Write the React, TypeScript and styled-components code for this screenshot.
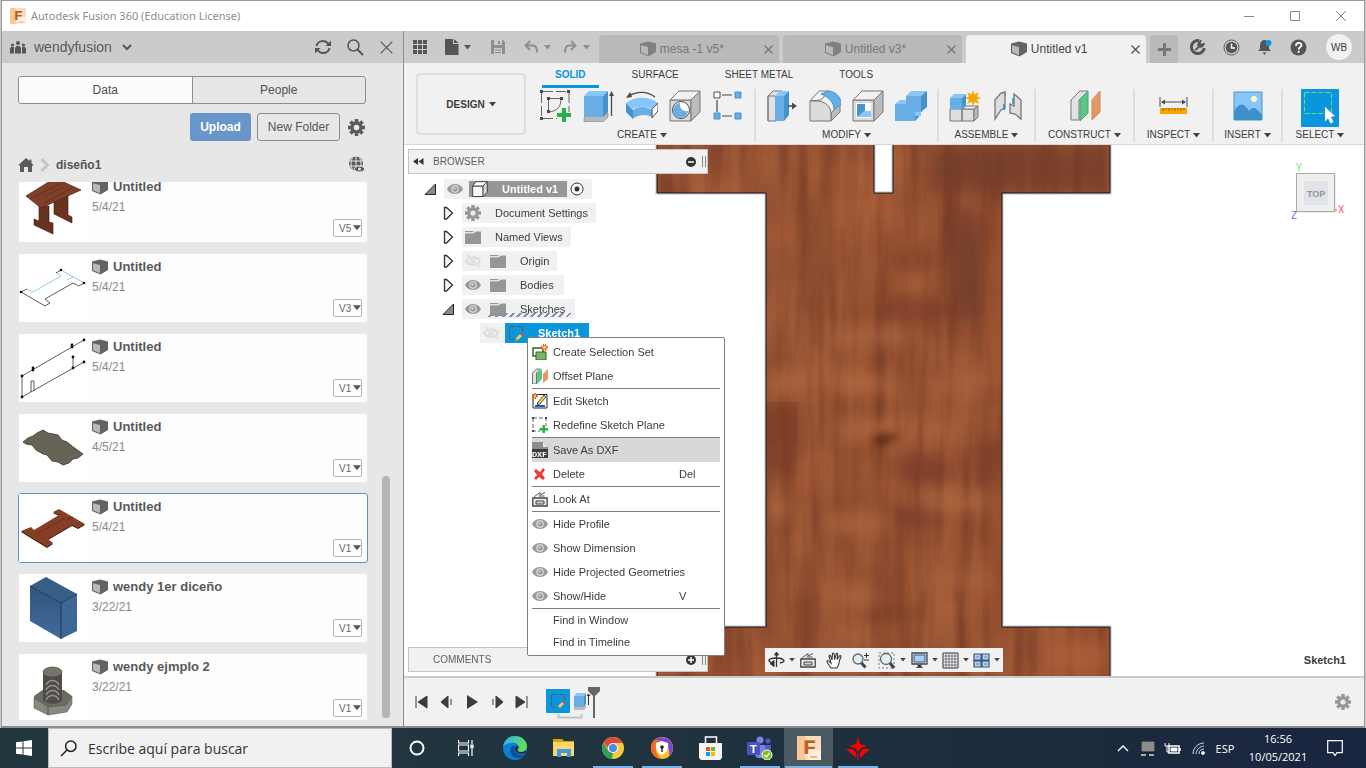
import React from 'react';
import styled, { createGlobalStyle, css } from 'styled-components';

const Global = createGlobalStyle`
  * { box-sizing: border-box; }
  body { margin: 0; font-family: "Liberation Sans", Arial, sans-serif; font-size: 11px; color: #3c3c3c; background: #c9c9c9; }
  button, input, select { font: inherit; color: inherit; background: none; border: 0; padding: 0; margin: 0; }
  ul { list-style: none; margin: 0; padding: 0; }
  h1, h2, p { margin: 0; font: inherit; }
  svg { display: block; flex: none; }
`;

/* ---------- window ---------- */
const Desktop = styled.div`
  display: flex;
  flex-direction: column;
  height: 100vh;
  min-height: 600px;
  overflow: hidden;
`;
const AppWindow = styled.div`
  flex: 1;
  min-height: 0;
  display: flex;
  flex-direction: column;
  margin: 0 1px;
  border: 1px solid #999;
  border-bottom: 2px solid #8c8c8c;
  background: #fff;
`;
const TitleBar = styled.header`
  height: 30px;
  flex: none;
  display: flex;
  align-items: center;
  padding-left: 8px;
  background: #fff;
`;
const Title = styled.h1`
  flex: 1;
  margin-left: 5px;
  font-family: "Noto Sans", "Open Sans", sans-serif;
  font-size: 11px;
  line-height: 14px;
  color: #8d8d8d;
`;
const WinButton = styled.button`
  width: 46px;
  height: 30px;
  display: grid;
  place-items: center;
`;
const Body = styled.div`
  flex: 1;
  min-height: 0;
  display: flex;
`;

/* ---------- data panel ---------- */
const DataPanel = styled.aside`
  width: 402px;
  flex: none;
  display: flex;
  flex-direction: column;
  background: #e7e7e7;
  border-right: 1px solid #8f8f8f;
`;
const PanelHeader = styled.div`
  height: 32px;
  flex: none;
  display: flex;
  align-items: center;
  padding: 0 10px 0 8px;
  background: #cbcbcb;
`;
const TeamButton = styled.button`
  flex: 1;
  display: flex;
  align-items: center;
  gap: 8px;
  font-size: 14px;
  color: #5a5a5a;
`;
const HeaderActions = styled.div`
  display: flex;
  align-items: center;
  gap: 16px;
`;
const IconButton = styled.button`
  display: grid;
  place-items: center;
`;
const Segments = styled.div`
  display: flex;
  height: 28px;
  flex: none;
  margin: 13px 37px 0 16px;
  border: 1px solid #8e8e8e;
  border-radius: 3px;
  overflow: hidden;
`;
const Segment = styled.button<{ $on?: boolean }>`
  flex: 1;
  font-size: 12px;
  color: #4f4f4f;
  ${p => p.$on && css`background: #fcfcfc; border-right: 1px solid #8e8e8e;`}
`;
const ActionRow = styled.div`
  display: flex;
  flex: none;
  align-items: center;
  justify-content: flex-end;
  margin: 9px 38px 0 16px;
  height: 28px;
`;
const Action = styled.button<{ $primary?: boolean }>`
  height: 28px;
  border-radius: 3px;
  font-size: 12px;
  ${p => p.$primary
    ? css`width: 61px; margin-right: 6px; background: #6896ca; color: #fff; font-weight: bold;`
    : css`width: 83px; margin-right: 8px; border: 1px solid #8e8e8e; color: #555;`}
`;
const Crumbs = styled.nav`
  display: flex;
  flex: none;
  align-items: center;
  gap: 6px;
  height: 41px;
  padding: 6px 38px 0 16px;
  font-size: 12px;
  font-weight: bold;
  color: #555;
`;
const Crumb = styled.span`flex: 1;`;
const ListArea = styled.div`
  flex: 1;
  min-height: 0;
  display: flex;
  margin: 0 13px 6px 16px;
`;
const CardList = styled.ul`
  flex: 1;
  overflow: hidden;
`;
const ScrollTrack = styled.div`
  width: 8px;
  margin-left: 14px;
  display: flex;
  flex-direction: column;
  justify-content: flex-end;
`;
const ScrollThumb = styled.div`
  height: 45%;
  margin-bottom: 2px;
  border-radius: 4px;
  background: #b5b5b5;
`;
const Card = styled.li<{ $selected?: boolean }>`
  display: flex;
  height: 70px;
  margin-bottom: 10px;
  border: 1px solid ${p => (p.$selected ? '#5f90ca' : 'transparent')};
  border-radius: 3px;
  background: #fdfdfd padding-box;
  &:first-child { margin-top: -9px; }
`;
const Thumb = styled.div`
  width: 68px;
  background: #fff;
`;
const CardText = styled.div`
  flex: 1;
  padding: 4px 0 0 5px;
`;
const CardName = styled.h2`
  display: flex;
  align-items: center;
  gap: 5px;
  height: 17px;
  font-size: 13px;
  font-weight: bold;
  color: #595959;
`;
const CardDate = styled.p`
  margin-top: 5px;
  font-size: 12px;
  line-height: 15px;
  color: #8a8a8a;
`;
const VersionBox = styled.label`
  align-self: flex-end;
  display: flex;
  align-items: center;
  width: 29px;
  height: 18px;
  margin: 0 5px 5px 0;
  padding-left: 5px;
  border: 1px solid #b5b5b5;
  border-radius: 2px;
  color: #666;
`;
const VersionSelect = styled.select`
  appearance: none;
  width: 14px;
  font-size: 10px;
`;

/* ---------- workspace ---------- */
const Workspace = styled.main`
  flex: 1;
  min-width: 0;
  display: flex;
  flex-direction: column;
`;
const TabBar = styled.div`
  height: 32px;
  flex: none;
  display: flex;
  align-items: center;
  background: #cbcbcb;
`;
const QuickTools = styled.div`
  width: 195px;
  flex: none;
  display: flex;
  align-items: center;
  padding-left: 9px;
`;
const QuickButton = styled.button<{ $gap?: number }>`
  display: flex;
  align-items: center;
  gap: 5px;
  margin-right: ${p => p.$gap ?? 0}px;
`;
const DocTabs = styled.div`
  flex: 1;
  min-width: 0;
  display: flex;
  gap: 4px;
  align-self: flex-end;
`;
const DocTab = styled.div<{ $active?: boolean }>`
  flex: 1;
  display: flex;
  align-items: center;
  height: 28px;
  padding: 0 6px 0 1px;
  border-radius: 4px 4px 0 0;
  font-size: 12px;
  background: ${p => (p.$active ? '#f1f1f1' : '#b9b9b9')};
  color: ${p => (p.$active ? '#444' : '#777')};
`;
const TabLabel = styled.button`
  flex: 1;
  display: flex;
  align-items: center;
  justify-content: center;
  gap: 4px;
`;
const AddTab = styled.button`
  width: 28px;
  height: 28px;
  margin-left: 4px;
  align-self: flex-end;
  display: grid;
  place-items: center;
  background: #bababa;
  border-radius: 4px 4px 0 0;
`;
const Services = styled.div`
  width: 186px;
  flex: none;
  display: flex;
  align-items: center;
  gap: 17px;
  padding-left: 12px;
`;
const Avatar = styled.button`
  width: 26px;
  height: 26px;
  margin-left: 2px;
  border-radius: 50%;
  background: #f1f1f1;
  font-size: 10px;
`;

const Ribbon = styled.div`
  flex: none;
  display: flex;
  height: 82px;
  background: #f1f1f1;
  border-bottom: 1px solid #d8d8d8;
`;
const DesignButton = styled.button`
  width: 110px;
  height: 62px;
  flex: none;
  margin: 10px 4px 0 12px;
  display: flex;
  align-items: center;
  justify-content: center;
  gap: 4px;
  border: 2px solid #dedede;
  border-radius: 4px;
  font-size: 10px;
  font-weight: bold;
`;
const RibbonMain = styled.div`
  flex: 1;
  min-width: 0;
`;
const RibbonTabs = styled.div`
  display: flex;
  gap: 20px;
  height: 25px;
  padding-left: 12px;
`;
const RibbonTab = styled.button<{ $on?: boolean }>`
  height: 25px;
  padding: 0 13px;
  font-size: 10px;
  border-bottom: 3px solid ${p => (p.$on ? '#0a96dc' : 'transparent')};
  ${p => p.$on && css`color: #0a96dc; font-weight: bold;`}
`;
const Groups = styled.div`
  display: flex;
  height: 53px;
  margin-top: 1px;
`;
const Group = styled.section<{ $w: number }>`
  flex: 0 1 ${p => p.$w}px;
  display: flex;
  flex-direction: column;
  align-items: center;
  & + & { border-left: 2px solid #dedede; }
`;
const Tools = styled.div`
  display: flex;
  height: 34px;
`;
const Tool = styled.button`
  width: 43px;
  height: 34px;
  display: grid;
  place-items: center;
`;
const GroupLabel = styled.button`
  display: flex;
  align-items: center;
  gap: 3px;
  margin-top: 6px;
  font-size: 10px;
  line-height: 12px;
  white-space: nowrap;
`;

/* ---------- canvas ---------- */
const Canvas = styled.div`
  position: relative;
  flex: 1;
  min-height: 0;
  display: flex;
  overflow: hidden;
  background: #fff;
`;
const Model = styled.svg`
  position: absolute;
  left: 251px;
  top: 0;
`;
const BrowserColumn = styled.div`
  position: relative;
  display: flex;
  flex-direction: column;
  width: 300px;
  margin: 4px;
`;
const PaletteBar = styled.div`
  height: 25px;
  flex: none;
  display: flex;
  align-items: center;
  padding: 0 1px 0 4px;
  border: 1px solid #c4c4c4;
  background: #f1f1f1;
  font-size: 10px;
  color: #5f5f5f;
`;
const PaletteTitle = styled.span<{ $indent?: number }>`
  flex: 1;
  margin-left: ${p => p.$indent}px;
`;
const Grip = styled.span`
  width: 4px;
  height: 11px;
  margin-left: 6px;
  border: solid #8a8a8a;
  border-width: 0 1px;
`;
const Tree = styled.ul`
  flex: 1;
  padding: 3px 0 0 16px;
`;
const Node = styled.li<{ $depth: number }>`
  display: flex;
  align-items: center;
  height: 24px;
  padding-left: ${p => p.$depth * 18}px;
`;
const Toggle = styled.button`
  width: 20px;
  height: 16px;
  flex: none;
`;
const NoToggle = styled.span`
  width: 20px;
  flex: none;
`;
const NodeBox = styled.div<{ $r?: number }>`
  display: flex;
  align-items: center;
  height: 20px;
  padding-right: ${p => p.$r ?? 10}px;
  background: #f1f1f1;
`;
const Cell = styled.span<{ $w?: number }>`
  width: ${p => p.$w ?? 25}px;
  height: 20px;
  display: flex;
  align-items: center;
  padding-left: 3px;
`;
const NodeName = styled.span<{ $tone?: string; $hatch?: boolean }>`
  display: flex;
  align-items: center;
  height: ${p => (p.$tone === '#969696' ? 16 : 20)}px;
  ${p => p.$tone && css`background: ${p.$tone}; color: #fff; font-weight: bold; padding-right: 9px;`}
  ${p => p.$hatch && css`
    position: relative;
    margin-right: -8px;
    padding-right: 8px;
    &::after {
      content: '';
      position: absolute;
      inset: 14px 0 2px 0;
      background: repeating-linear-gradient(135deg, transparent 0 3px, #7d91b3 3px 5px);
    }
  `}
`;
const Menu = styled.ul`
  position: absolute;
  left: 123px;
  top: 192px;
  width: 198px;
  padding: 2px 4px;
  border: 1px solid #808080;
  border-radius: 2px;
  background: #fff;
`;
const MenuItem = styled.li<{ $line?: boolean; $on?: boolean; $short?: boolean }>`
  ${p => p.$line && css`border-top: 1px solid #808080;`}
  background: ${p => (p.$on ? '#d8d8d8' : 'none')};
  button {
    width: 100%;
    height: ${p => (p.$short ? 22 : 24)}px;
    display: flex;
    align-items: center;
    text-align: left;
  }
`;
const MenuIcon = styled.span`width: 21px; flex: none;`;
const MenuText = styled.span<{ $key?: boolean }>`
  ${p => (p.$key ? css`width: 41px;` : css`flex: 1; white-space: nowrap;`)}
`;
const NavBar = styled.div`
  position: absolute;
  left: 0;
  right: 0;
  bottom: 4px;
  width: 238px;
  height: 24px;
  margin: 0 auto;
  padding-left: 3px;
  display: flex;
  align-items: center;
  background: #f1f1f1;
`;
const NavButton = styled.button<{ $w: number }>`
  width: ${p => p.$w}px;
  height: 24px;
  display: flex;
  align-items: center;
  gap: 4px;
`;
const ViewCube = styled.svg`
  position: absolute;
  right: 16px;
  top: 14px;
`;
const Status = styled.div`
  position: absolute;
  right: 18px;
  bottom: 10px;
  font-weight: bold;
`;
const Timeline = styled.div`
  flex: none;
  display: flex;
  align-items: center;
  height: 50px;
  padding: 0 13px 0 5px;
  border-top: 2px solid #ccc;
  background: #f1f1f1;
`;
const PlayButton = styled.button`
  width: 25px;
  display: grid;
  place-items: center;
`;
const Features = styled.div`
  flex: 1;
  padding-left: 12px;
`;

/* ---------- taskbar ---------- */
const Taskbar = styled.footer`
  height: 40px;
  flex: none;
  display: flex;
  background: linear-gradient(90deg, #22383f 0%, #20343f 45%, #1b2a3d 80%, #1a2540 100%);
  color: #fff;
  font-family: "Open Sans", "Noto Sans", sans-serif;
`;
const StartButton = styled.button`
  width: 48px;
  display: grid;
  place-items: center;
`;
const SearchBox = styled.label`
  width: 344px;
  display: flex;
  align-items: center;
  gap: 11px;
  padding-left: 11px;
  background: #f1f1f1;
  border: 1px solid #bbb;
`;
const SearchInput = styled.input`
  flex: 1;
  min-width: 0;
  font-size: 14px;
  color: #333;
  outline: 0;
  &::placeholder { color: #333; opacity: 1; }
`;
const TaskButton = styled.button<{ $open?: boolean; $active?: boolean }>`
  width: 49px;
  height: 40px;
  display: grid;
  place-items: center;
  ${p => p.$open && css`background: linear-gradient(#78b4ea, #78b4ea) center bottom / 40px 2px no-repeat;`}
  ${p => p.$active && css`background: linear-gradient(#78b4ea, #78b4ea) center bottom / 47px 2px no-repeat, #4a5962;`}
`;
const Tray = styled.div`
  margin-left: auto;
  display: flex;
  align-items: center;
  padding-right: 13px;
  font-size: 11px;
`;
const TrayItem = styled.button<{ $w: number }>`
  width: ${p => p.$w}px;
  height: 40px;
  display: grid;
  place-items: center;
`;
const Clock = styled.time`
  width: 78px;
  text-align: center;
  line-height: 18px;
`;

/* ---------- icons ---------- */
const Caret = ({ c = '#444', s = 7 }: { c?: string; s?: number }) => (
  <svg width={s} height={s - 2} viewBox="0 0 7 5"><path d="M0 0h7L3.5 4.5z" fill={c} /></svg>
);
const Gear = ({ c = '#5c5c5c', s = 16 }: { c?: string; s?: number }) => (
  <svg width={s} height={s} viewBox="0 0 16 16" fill="none">
    {[0, 45, 90, 135].map(a => <path key={a} d="M6.300 0h3.400v16H6.300z" fill={c} transform={`rotate(${a} 8 8)`} />)}
    <circle cx="8" cy="8" r="5.800" fill={c} />
    <circle cx="8" cy="8" r="2.600" fill="#ececec" />
  </svg>
);
const DocCube = ({ dim }: { dim?: boolean }) => (
  <svg width="16" height="16" viewBox="0 0 16 16" opacity={dim ? 0.65 : 1}>
    <path d="M0 2.500 8 .5l8 2v8.500L8.500 15.500 0 12z" fill="#636363" />
    <path d="M1 4.200 8 6v8.200l-7-3z" fill="#b8b8b8" />
  </svg>
);
const Eye = () => (
  <svg width="16" height="12" viewBox="0 0 16 12">
    <path d="M0 6C3-.7 13-.7 16 6 13 12.700 3 12.700 0 6z" fill="#999" />
    <circle cx="8" cy="6" r="3.700" fill="#e8e8e8" /><circle cx="8" cy="6" r="2.700" fill="#999" /><circle cx="7.500" cy="5.500" r="1" fill="#e8e8e8" />
  </svg>
);
const EyeOff = () => (
  <svg width="16" height="14" viewBox="0 0 16 14" fill="none" stroke="#d9d9d9">
    <path d="M1 7c3-5 11-5 14 0-3 5-11 5-14 0z" strokeWidth="2" /><circle cx="8" cy="7" r="2" strokeWidth="1.500" />
    <path d="m2 1 13 12" stroke="#f1f1f1" strokeWidth="3" /><path d="m2 1 13 12" strokeWidth="1.500" />
  </svg>
);
const Folder = () => (
  <svg width="16" height="14" viewBox="0 0 16 14">
    <path d="M0 4h16v10H0z" fill="#969696" /><path d="M0 1h8l1 1H0zM0 2.800h9l2-1.300h5V5H0z" fill="#969696" /><path d="M0 3h8l2-1" stroke="#f1f1f1" fill="none" strokeWidth=".8" />
  </svg>
);
const SketchIcon = () => (
  <svg width="16" height="16" viewBox="0 0 16 16" fill="none">
    <path d="M2 1.500h12M2 14.500h7M1.500 2v11M14.500 2v6" stroke="#595959" strokeDasharray="5 2" />
    <path d="m8 13 4-4 2 2-4 4z" fill="#f9cb55" /><path d="m12 9 1.500-1.500 2 2L14 11z" fill="#f04040" /><path d="m7 15.500 1-2.500 2 2z" fill="#e8a75c" />
  </svg>
);
const Close = ({ c = '#666', s = 10 }: { c?: string; s?: number }) => (
  <svg width={s} height={s} viewBox="0 0 10 10" stroke={c} strokeWidth={s > 12 ? 0.9 : 1.4}><path d="m.5.5 9 9m0-9-9 9" /></svg>
);
const Search = ({ c = '#555', flip }: { c?: string; flip?: boolean }) => (
  <svg width="17" height="17" viewBox="0 0 17 17" fill="none" stroke={c} strokeWidth="1.500">
    {flip ? <path d="M6.500 10.500 1 16M16 6.200a5.200 5.200 0 1 1-10.400 0 5.200 5.200 0 0 1 10.400 0z" />
      : <><circle cx="6.500" cy="6.500" r="5.500" /><path d="m10.500 10.500 5.500 5.500" strokeWidth="2" /></>}
  </svg>
);
const FusionLogo = ({ s }: { s: number }) => (
  <svg width={s} height={s} viewBox="0 0 24 24">
    <path d="M0 0h24v24H0z" fill="#fbdcc0" /><path d="M0 0h8v24H0z" fill="#f9c79b" /><path d="M8 14h16v10H12z" fill="#fdeee0" />
    <text x="6" y="18" fontFamily="Liberation Sans, sans-serif" fontWeight="bold" fontSize="20" fill="#e08a38">F</text>
    <text x="7" y="18" fontFamily="Liberation Sans, sans-serif" fontWeight="bold" fontSize="19" fill="#b5621f">F</text>
    <path d="M13 20h7v2h-7z" fill="#f5b781" />
  </svg>
);
const Pm = ({ plus }: { plus?: boolean }) => (
  <svg width="10" height="10" viewBox="0 0 10 10"><circle cx="5" cy="5" r="5" fill="#333" /><path d={plus ? 'M2 5h6M5 2v6' : 'M2 5h6'} stroke="#fff" strokeWidth="1.500" /></svg>
);

/* ribbon drawings, 32px grid */
const K = '#4a4a4a';
const B1 = '#86c6fa';
const B2 = '#68aee4';
const B3 = '#4593ca';
const ribbonArt: Record<string, React.ReactNode> = {
  sketch: <>
    <g fill="none" stroke="#666"><path d="M3 1.500h24M29 3v19M1.500 3v24M3 28.500h14" strokeDasharray="10 3" /><path d="M9 8.500h12M8.500 9v12M9 22c8-1 12-5 12-13" /></g>
    <path d="M0 0h3v3H0zM27 0h3v3h-3zM0 27h3v3H0zM7 7h3v3H7zM20 7h3v3h-3zM7 20h3v3H7z" fill={K} />
    <path d="M22 18h4v5h5v4h-5v5h-4v-5h-5v-4h5z" fill="#25b24b" />
  </>,
  extrude: <>
    <path d="m1 28 4-4 20-1v4l-5 5H1z" fill="#b8b8b8" stroke="#777" strokeWidth=".6" />
    <path d="M1 6h19v21H1z" fill={B2} /><path d="m1 6 5-5h19l-5 5z" fill={B1} /><path d="m20 6 5-5v21l-5 5z" fill={B3} />
    <path d="M28.500 26V4" stroke={K} strokeWidth="1.300" /><path d="m26 6 2.500-5L31 6z" fill={K} />
  </>,
  revolve: <>
    <path d="M0 13C8 6 24 6 32 13l-6 6c-5-3-14-3-19 0z" fill={B1} /><path d="M0 13v9l7 7v-9z" fill={B3} /><path d="M7 20c5-4 14-4 19 0v7c-5-3-14-3-19 2z" fill={B2} />
    <path d="m26 19 6-6v8l-6 7z" fill="#fff" stroke={K} /><path d="M3 6c8-5 18-5 26 1" fill="none" stroke={K} strokeWidth="1.400" /><path d="m0 8 4-6 2 5z" fill={K} />
  </>,
  hole: <>
    <path d="M1 10h21v21H1z" fill="#dcdcdc" stroke="#777" /><path d="m1 10 9-9h21l-9 9z" fill="#f2f2f2" stroke="#777" /><path d="m22 10 9-9v21l-9 9z" fill="#bcbcbc" stroke="#777" />
    <circle cx="12" cy="20" r="8.500" fill="#fff" stroke={K} /><path d="M11 13a7.500 7.500 0 1 0 8 8c-5 1-9-3-8-8z" fill={B2} />
  </>,
  pattern: <>
    <path d="M10 5h10M10 26h10M5 10v12" stroke={K} strokeWidth="1.200" /><path d="M2 2h6v6H2z" fill="#fff" stroke={K} /><path d="M23 2h6v6h-6zM2 23h6v6H2zM23 23h6v6h-6z" fill={B2} stroke={B3} />
  </>,
  press: <>
    <path d="m2 6 5-5h9v25l-6 5H2z" fill="#e2e2e2" stroke="#777" /><path d="M2 6h7M2 6v25" stroke="#777" />
    <path d="M9 6h9v25H9z" fill={B2} /><path d="m9 6 5-5h9l-5 5z" fill={B1} /><path d="m18 6 5-5v24l-5 6z" fill={B3} /><path d="M22 16h6" stroke={K} strokeWidth="1.500" /><path d="m26 12.500 5 3.500-5 3.500z" fill={K} />
  </>,
  fillet: <>
    <path d="M1 11 10 1h10l-8 9z" fill="#f4f4f4" stroke="#777" />
    <path d="M22 31v-8l9-9v8z" fill="#bcbcbc" stroke="#777" />
    <path d="M1 31V11h6c9 0 15 5 15 13v7z" fill="#dcdcdc" stroke="#777" />
    <path d="M12 4 20 1c7 1 12 6 12 13l-7 6c0-8-5-13-13-16z" fill={B2} stroke={B3} />
  </>,
  shell: <>
    <path d="M1 10h21v21H1z" fill="#dcdcdc" stroke="#777" /><path d="m1 10 9-9h21l-9 9z" fill="#f2f2f2" stroke="#777" /><path d="m22 10 9-9v21l-9 9z" fill="#bcbcbc" stroke="#777" />
    <path d="M4 13h15v15H4z" fill="#fff" /><path d="M5 14h8v8l-8 5z" fill={B3} /><path d="M5 27l7-6h7v6z" fill={B1} />
  </>,
  combine: <>
    <path d="M0 14h11V6h15v20h-6v5H0z" fill={B2} /><path d="m0 14 5-4h6v4zM11 6l5-5h16l-6 5z" fill={B1} /><path d="m26 6 6-5v16l-6 5zM20 25l4-3v5l-4 4z" fill={B3} /><path d="M20 22h6v4h-6z" fill={B1} />
  </>,
  component: <>
    <path d="M1 19h12v12H1zM13 19h12v12H13z" fill="#dedede" stroke="#777" /><path d="m13 19 4-3h12l-4 3z" fill="#f2f2f2" stroke="#777" /><path d="m25 19 4-3v11l-4 4z" fill="#bbb" stroke="#777" />
    <path d="M1 8h12v11H1z" fill={B2} /><path d="m1 8 4-4h12l-4 4z" fill={B1} /><path d="m13 8 4-4v11l-4 4z" fill={B3} />
    <path d="m24 0 1.500 4.500L30 2l-2 4.500 4 1.500-4 1.500 2 4.500-4.500-2L24 16l-1.500-4.500L18 14l2-4.500L16 8l4-1.500L18 2l4.500 2.500z" fill="#f7a600" />
  </>,
  joint: <>
    <path d="m3 10 6-7 4-1v16l-4 2-6 9z" fill="#ddd" stroke="#777" strokeWidth="1.300" /><path d="M10 4c2-4 5-1 3 2" fill="none" stroke="#777" /><path d="M29 10l-7-6v12l-4-2v9l5 1 6 5z" fill="#ddd" stroke="#777" strokeWidth="1.300" /><path d="M12 14v6M21 8v6" stroke="#0a96dc" strokeWidth="1.500" />
  </>,
  plane: <>
    <path d="m2 10 9-9h8l-9 9v20H2z" fill="#e2e2e2" stroke="#777" /><path d="m11 9 8-8v22l-8 8z" fill="#5bc684" stroke="#4aa56c" /><path d="m23 10 8-9v21l-8 8z" fill="#e69866" stroke="#cf855a" />
  </>,
  measure: <>
    <path d="M2 7v10M29 7v10M4 12h23" stroke={K} /><path d="m3 12 4-2.500v5zM28 12l-4-2.500v5z" fill={K} /><path d="M2 18h27v6H2z" fill="#f9a600" /><path d="M5 18v3M8 18v2M11 18v3M14 18v2M17 18v3M20 18v2M23 18v3M26 18v2" stroke="#8a5c00" />
  </>,
  picture: <>
    <path d="M2 2h28v28H2z" fill={B1} stroke={B3} /><circle cx="22" cy="9" r="3" fill="#fbf8c3" /><path d="M2 21c5-7 9-10 15 0 4-5 7-4 13 4v5H2z" fill="#3d90cc" />
  </>,
};
const Art = ({ n }: { n: string }) => <svg width="32" height="32" viewBox="0 0 32 32">{ribbonArt[n]}</svg>;

const SelectArt = () => (
  <svg width="38" height="38" viewBox="0 0 38 38">
    <path d="M0 0h38v38H0z" fill="#0a96dc" /><path d="M3.500 3.500h27v21h-27z" fill="none" stroke="#6fdc83" strokeDasharray="5 2" />
    <path d="m24 18 10 9-4 1 2.500 5-3 1.500L27 29.500l-3 3z" fill="#fff" />
  </svg>
);

/* context menu drawings, 16px grid */
const menuArt: Record<string, React.ReactNode> = {
  set: <><path d="M1 4h10v8H1z" fill="#fff" stroke="#2c6a1e" strokeWidth="1.500" /><path d="M4 8h10v8H4z" fill="#7cb267" stroke="#2c6a1e" /><circle cx="12.500" cy="3.500" r="2.500" fill="#ffc83d" stroke="#d8451a" strokeDasharray="1 1" strokeWidth="2" /></>,
  plane: <><path d="m.5 5 4-4h4l-4 4v11h-4z" fill="#e2e2e2" stroke="#777" /><path d="m5 5 5-4v10l-5 5z" fill="#5bc684" /><path d="m11 6 5-5v10l-5 4z" fill="#e69866" /></>,
  edit: <><path d="M1 1.500h14V15H1z" fill="#fff" stroke="#222" /><path d="M3 13h10" stroke="#1661c9" strokeWidth="2" /><path d="m6 9 6-7 2 2-6 7-3 1z" fill="#f8c649" stroke="#333" strokeWidth=".8" /><circle cx="3" cy="3" r="2" fill="#ffc83d" stroke="#d8451a" strokeDasharray="1 1" strokeWidth="2" /></>,
  redefine: <><path d="M1 1h13v8M1 1v13h7" fill="none" stroke="#666" strokeDasharray="4 2" /><path d="M0 0h2v2H0zM13 0h2v2h-2zM0 13h2v2H0z" fill="#444" /><path d="M10.500 8h2.500v3h3v2.500h-3v3h-2.500v-3h-3V11h3z" fill="#25b24b" /></>,
  dxf: <><path d="M0 0h11l5 5v3H0z" fill="#8d8d8d" /><path d="M11 0v5h5z" fill="#e6e6e6" /><path d="M0 7h16v9H0z" fill="#3c3c3c" /><text x="0" y="15" fontSize="8" fontWeight="bold" fontFamily="Roboto, sans-serif" fill="#fff">DXF</text></>,
  del: <path d="m2 5 2-2 4 3 3-4 2 2-3 4 3 4-2 2-4-3-3 3-2-2 3-3z" fill="#ee3b3b" />,
  look: <><path d="M.8 7h14.400v8H.8z" fill="#e8ecef" stroke="#444" strokeWidth="1.300" /><path d="M4 10h8v3H4z" fill="#ccd4da" stroke="#444" /><path d="M2.500 7V5.500L8 1.500v2.500l5-2.500M6.500 5h6" fill="none" stroke="#555" /></>,
};
const MArt = ({ n }: { n: string }) => n === 'eye' ? <Eye /> : <svg width="16" height="16" viewBox="0 0 16 16">{menuArt[n]}</svg>;

/* ---------- model and thumbnails ---------- */
const shape = 'M0-3H217V48H236V-3H453V48H345V482H453V535H0V482H109V48H0Z';
const ModelView = () => (
  <Model width="460" height="100%" viewBox="-2 0 460 531" preserveAspectRatio="xMinYMin slice" aria-label="Wood board">
    <defs>
      <clipPath id="board"><path d={shape} /></clipPath>
      <filter id="grain" x="0" y="0" width="1" height="1" colorInterpolationFilters="sRGB">
        <feTurbulence type="fractalNoise" baseFrequency="0.06 0.005" numOctaves="3" seed="8" />
        <feColorMatrix values="0 0 0 0 .4  0 0 0 0 .19  0 0 0 0 .13  2.200 0 0 0 -.850" />
      </filter>
      <filter id="glow" x="0" y="0" width="1" height="1" colorInterpolationFilters="sRGB">
        <feTurbulence type="fractalNoise" baseFrequency="0.04 0.012" numOctaves="2" seed="31" />
        <feColorMatrix values="0 0 0 0 .72  0 0 0 0 .43  0 0 0 0 .26  2.400 0 0 0 -1" />
      </filter>
      <filter id="figure" x="0" y="0" width="1" height="1" colorInterpolationFilters="sRGB">
        <feTurbulence type="fractalNoise" baseFrequency="0.012 0.02" numOctaves="2" seed="12" />
        <feColorMatrix values="0 0 0 0 .72  0 0 0 0 .42  0 0 0 0 .26  2.400 0 0 0 -.950" />
      </filter>
      <filter id="soft" x="-.5" y="-.5" width="2" height="2"><feGaussianBlur stdDeviation="8" /></filter>
      <filter id="knot" x="-.5" y="-.5" width="2" height="2"><feGaussianBlur stdDeviation="4" /></filter>
    </defs>
    <path d={shape} fill="none" stroke="#d5e0f3" strokeWidth="4" />
    <g clipPath="url(#board)">
      <path d="M0 0h453v531H0z" fill="#965233" />
      <path d="M0 0h453v531H0z" filter="url(#figure)" opacity=".45" />
      <path d="M0 0h453v531H0z" filter="url(#glow)" opacity=".4" />
      <path d="M0 0h453v531H0z" filter="url(#grain)" opacity=".55" />
      <g filter="url(#soft)">
        <path d="M270 0h183v48H270z" fill="#6b3526" opacity=".6" />
        <path d="M109 262h28v70h-28zM320 290h30v50h-30zM338 340h12v140h-12z" fill="#783924" opacity=".65" />
        <ellipse cx="310" cy="120" rx="14" ry="60" fill="#5f3024" opacity=".6" />
        <ellipse cx="255" cy="115" rx="26" ry="14" fill="#713424" opacity=".45" />
        <ellipse cx="260" cy="165" rx="40" ry="14" fill="#713424" opacity=".5" />
        <ellipse cx="265" cy="325" rx="30" ry="16" fill="#713424" opacity=".6" />
        <ellipse cx="262" cy="372" rx="30" ry="12" fill="#713424" opacity=".55" />
        <ellipse cx="235" cy="467" rx="40" ry="10" fill="#74351f" opacity=".5" />
        <ellipse cx="155" cy="110" rx="12" ry="60" fill="#74422b" opacity=".5" />
        <path d="M175 184h70v14h-70zM175 232h60v14h-60zM110 225h34v28h-34zM270 350h60v14h-60zM170 370h60v16h-60zM180 275h60v20h-60zM112 352h20v20h-20zM270 235h50v10h-50zM260 430h70v10h-70zM180 445h40v16h-40z" fill="#bd6f42" opacity=".6" />
        <path d="M333 60h14v180h-14z" fill="#a5522c" opacity=".6" />
        <path d="M390 494h63v37h-63z" fill="#b36238" opacity=".7" />
      </g>
      <path d="M109 257h32v40h-32z" fill="#7c3b26" opacity=".4" />
      <path d="M214 295c8-8 18-8 30-3-8 4-16 4-18 12z" fill="#552619" filter="url(#knot)" opacity=".9" />
    </g>
    <path d={shape} fill="none" stroke="#1c0f0b" />
  </Model>
);

const dot = (p: number[][], r = 1.500) => p.map(([x, y]) => <circle key={`${x}-${y}`} cx={x} cy={y} r={r} fill="#111" />);
const thumbs: Record<string, React.ReactNode> = {
  table: <>
    <path d="M20 32h10v16l4 1v11l-19-9v-6l5 2zM35 27l14-6v20l4 2v6l-18-9z" fill="#6a3320" stroke="#3c1a10" strokeWidth=".6" />
    <path d="M7 22 36 4l26 12-40 18z" fill="#7e402a" stroke="#4a2317" strokeWidth=".7" /><path d="m15 23 28-14M25 29l28-15M26 22l18-9" stroke="#5d2b1c" strokeWidth=".8" />
  </>,
  outline: <>
    <path d="m2 38 24 14 5-3-5-4 28-16 6 3 5-3" fill="none" stroke="#333" strokeWidth=".8" /><path d="m8 35 6 3 28-16-5-4M42 16l23 13M48 26l6-3" fill="none" stroke="#8accf0" /><path d="m2 38 6-3M37 19l5-3" stroke="#333" strokeWidth=".8" />{dot([[2, 38], [42, 16], [65, 29]], 1.300)}
  </>,
  frame: <>
    <path d="M3 63V42L65 6M3 63l62-35M54 23v12M12 58V47h3v10" fill="none" stroke="#333" strokeWidth=".8" />{dot([[3, 42], [3, 63], [14, 34], [14, 36], [53, 11], [53, 13], [65, 6], [65, 28], [54, 23], [54, 34]], 1.400)}
  </>,
  slab: <><path d="m4 28 5-4 5-2 4-3 6-3 5 3 5 1 5 1 4 5 5 2 5 4 4 3 7 5-5 4-5 1-4 4-6 2-5-3-6-1-5-6-4-1-7-4-4-5-6-1z" fill="#686357" stroke="#37342d" strokeWidth=".8" /></>,
  board: <>
    <path d="m2 38 10-4 3 3 25-15-6-3 6-3 26 15-7 4-6-3-24 14 5 4-6 4z" fill="#35190f" />
    <path d="m2 37 10-4 3 3 25-15-6-3 6-3 26 15-7 4-6-3-24 14 5 4-6 4z" fill="#863f25" /><path d="m16 41 30-17M48 26l6-3" stroke="#6b2d1a" />
  </>,
  box: <>
    <path d="M11 12 27 3l31 17-16 9z" fill="#365f86" /><path d="m11 12 31 17v36L11 47z" fill="url(#bx)" /><path d="m42 29 16-9v37l-16 8z" fill="#3f6795" /><path d="m11 12 31 17 16-9M42 29v36" fill="none" stroke="#14283f" strokeWidth=".8" />
    <defs><linearGradient id="bx" x1="0" y1="0" x2="0" y2="1"><stop offset="0" stopColor="#31557a" /><stop offset="1" stopColor="#426b9f" /></linearGradient></defs>
  </>,
  bolt: <>
    <path d="m15 42 10-7 20 1 8 6-2 8-10 4-12 2-14-6z" fill="#6b6a63" /><path d="m15 44 14 9v8l-14-7zM29 53l18-2 6-9v8l-5 8-19 3z" fill="#898780" stroke="#4c4b46" strokeWidth=".5" />
    <path d="M24 18v28c4 5 16 5 19 0V18z" fill="#4d4c47" /><ellipse cx="33.500" cy="18" rx="9.500" ry="5" fill="#77746a" stroke="#444" strokeWidth=".6" />
    {[27, 32, 37, 42].map(y => <path key={y} d={`M27 ${y + 4}c3-6 10-6 13 0`} fill="none" stroke="#96938b" strokeWidth="1.500" />)}
  </>,
};

const cards = [
  ['Untitled', '5/4/21', 'V5', 'table'],
  ['Untitled', '5/4/21', 'V3', 'outline'],
  ['Untitled', '5/4/21', 'V1', 'frame'],
  ['Untitled', '4/5/21', 'V1', 'slab'],
  ['Untitled', '5/4/21', 'V1', 'board'],
  ['wendy 1er diceño', '3/22/21', 'V1', 'box'],
  ['wendy ejmplo 2', '3/22/21', 'V1', 'bolt'],
];
const groups: { label: string; w: number; tools: string[] }[] = [
  { label: 'CREATE', w: 224, tools: ['sketch', 'extrude', 'revolve', 'hole', 'pattern'] },
  { label: 'MODIFY', w: 183, tools: ['press', 'fillet', 'shell', 'combine'] },
  { label: 'ASSEMBLE', w: 97, tools: ['component', 'joint'] },
  { label: 'CONSTRUCT', w: 99, tools: ['plane'] },
  { label: 'INSPECT', w: 79, tools: ['measure'] },
  { label: 'INSERT', w: 69, tools: ['picture'] },
  { label: 'SELECT', w: 76, tools: ['select'] },
];
const menu: { t: string; icon?: string; key?: string; line?: boolean; on?: boolean }[] = [
  { t: 'Create Selection Set', icon: 'set' },
  { t: 'Offset Plane', icon: 'plane' },
  { t: 'Edit Sketch', icon: 'edit', line: true },
  { t: 'Redefine Sketch Plane', icon: 'redefine' },
  { t: 'Save As DXF', icon: 'dxf', line: true, on: true },
  { t: 'Delete', icon: 'del', key: 'Del' },
  { t: 'Look At', icon: 'look', line: true },
  { t: 'Hide Profile', icon: 'eye', line: true },
  { t: 'Show Dimension', icon: 'eye' },
  { t: 'Hide Projected Geometries', icon: 'eye' },
  { t: 'Show/Hide', icon: 'eye', key: 'V' },
  { t: 'Find in Window', line: true },
  { t: 'Find in Timeline' },
];

const Arrow = ({ open }: { open?: boolean }) => (
  <Toggle aria-label={open ? 'Collapse' : 'Expand'}>
    <svg width="16" height="16" viewBox="0 0 16 16">
      {open
        ? <path d="M1 13.500h10.500V3z" fill="#8a8a8a" stroke="#222" />
        : <path d="M2.500 2.500h2l6 5.500-6 6h-2z" fill="#f4f4f4" stroke="#333" strokeWidth="1.300" />}
    </svg>
  </Toggle>
);

const navArt = {
  orbit: <svg width="17" height="18" viewBox="0 0 17 18" fill="none" stroke="#333"><path d="M8.500 2v14" strokeWidth="1.300" /><path d="m6.500 4 2-3 2 3z" fill="#333" /><path d="M6 12C-2 11 0 7 8 7s11 4 4 5" strokeWidth="1.300" /><path d="m6 9.500-4 3 4 3z" fill="#333" /></svg>,
  hand: <svg width="17" height="17" viewBox="0 0 17 17" fill="#fff" stroke="#333" strokeWidth="1.100"><path d="M5 16C3 13 1 11 1 9c1-1 2 0 4 2L3 4c1-1.500 2-.5 3 4L6.500 1.500c1.500-1 2 0 2 6l2-6c1.500-.5 1.500.5.5 6l3-4c1.500 0 1 1-.5 5-.5 4-1 6-3 7.500z" /></svg>,
  zoom: <svg width="18" height="17" viewBox="0 0 18 17"><circle cx="6" cy="7" r="5" fill="#ddebf3" stroke="#666" strokeWidth="1.300" /><path d="m9.500 11 4 4.500" stroke="#2f4960" strokeWidth="3" /><path d="M12 3.500h5M14.500 1v5M12 8h5" stroke="#333" /></svg>,
  fit: <svg width="18" height="17" viewBox="0 0 18 17"><path d="M1 1h15v15H1z" fill="none" stroke="#777" strokeDasharray="2 2" /><circle cx="8" cy="7" r="5.500" fill="#e3f0f3" stroke="#666" strokeWidth="1.300" /><path d="m12 11 4 5" stroke="#2f4960" strokeWidth="3" /></svg>,
  display: <svg width="17" height="17" viewBox="0 0 17 17"><path d="M1 1h15v11H1z" fill="#e5e5e5" stroke="#444" strokeWidth="1.300" /><path d="M3 3h11v7H3z" fill="#a9cdf3" stroke="#35598c" /><path d="M5 15.500h7M7 13h3v2H7z" stroke="#555" /></svg>,
  grid: <svg width="17" height="17" viewBox="0 0 17 17"><path d="M1 1h15v15H1z" fill="#fafafa" stroke="#333" /><path d="M4 1v15M7 1v15M10 1v15M13 1v15M1 4h15M1 7h15M1 10h15M1 13h15" stroke="#667" strokeWidth=".9" /></svg>,
  views: <svg width="17" height="15" viewBox="0 0 17 15"><path d="M1 1h7v6H1zM9 1h7v6H9zM1 8h7v6H1zM9 8h7v6H9z" fill="#b5cff0" stroke="#38557f" strokeWidth="1.200" /><path d="M3.500 3.500h2v1h-2zM11.500 3.500h2v1h-2zM3.500 10.500h2v1h-2zM11.500 10.500h2v1h-2z" fill="#fff" stroke="#5d7ca8" strokeWidth=".6" /></svg>,
};

export default function App() {
  return (
    <Desktop>
      <Global />
      <AppWindow>
        <TitleBar>
          <FusionLogo s={16} />
          <Title>Autodesk Fusion 360 (Education License)</Title>
          <WinButton aria-label="Minimize"><svg width="10" height="10" stroke="#888"><path d="M0 5.500h10" /></svg></WinButton>
          <WinButton aria-label="Maximize"><svg width="10" height="10" fill="none" stroke="#888"><path d="M.5.5h9v9h-9z" /></svg></WinButton>
          <WinButton aria-label="Close"><svg width="10" height="10" stroke="#888"><path d="m0 0 10 10M10 0 0 10" /></svg></WinButton>
        </TitleBar>
        <Body>
          <DataPanel>
            <PanelHeader>
              <TeamButton>
                <svg width="16" height="13" viewBox="0 0 16 13" fill="#555"><circle cx="8" cy="2" r="2" /><circle cx="2.500" cy="4" r="1.600" /><circle cx="13.500" cy="4" r="1.600" /><path d="M5 12.500V7l1.500-2h3L11 7v5.500zM0 12.500V7.500L1 6h3v6.500zM12 12.500V6h3l1 1.500v5z" /></svg>
                wendyfusion
                <svg width="12" height="7" viewBox="0 0 12 7" fill="none" stroke="#555" strokeWidth="2"><path d="m3 1 4 4 4-4" /></svg>
              </TeamButton>
              <HeaderActions>
                <IconButton aria-label="Refresh">
                  <svg width="16" height="14" viewBox="0 0 16 14" fill="none" stroke="#555" strokeWidth="2"><path d="M1.500 6C2 3 5 1 8 1c2 0 4 1 5.500 3M14.500 8C14 11 11 13 8 13c-2 0-4-1-5.500-3" /><path d="M16 .5V6h-5.500zM0 13.500V8h5.500z" fill="#555" stroke="none" /></svg>
                </IconButton>
                <IconButton aria-label="Search"><Search /></IconButton>
                <IconButton aria-label="Close panel"><Close s={13} c="#555" /></IconButton>
              </HeaderActions>
            </PanelHeader>
            <Segments>
              <Segment $on>Data</Segment>
              <Segment>People</Segment>
            </Segments>
            <ActionRow>
              <Action $primary>Upload</Action>
              <Action>New Folder</Action>
              <IconButton aria-label="Settings"><Gear s={17} /></IconButton>
            </ActionRow>
            <Crumbs>
              <svg width="16" height="14" viewBox="0 0 16 14" fill="#5a5a5a"><path d="M8 0 0 7.500h2V14h4V9h4v5h4V7.500h2L13.500 5V1.500h-2V3z" /></svg>
              <svg width="10" height="14" viewBox="0 0 10 14" fill="none" stroke="#c6c6c6" strokeWidth="3"><path d="m1.500 1 6 6-6 6" /></svg>
              <Crumb>diseño1</Crumb>
              <svg width="17" height="17" viewBox="0 0 17 17"><circle cx="8" cy="7.500" r="7" fill="#5a5a5a" /><path d="M1 5h14M1 10h14M8 0v15M4.500 1.500c-2 4-2 8 0 12M11.500 1.500c2 4 2 8 0 12" stroke="#e7e7e7" fill="none" /><path d="M6 13c2-4 9-4 11 0-2 4-9 4-11 0z" fill="#5a5a5a" stroke="#e7e7e7" /><circle cx="11.500" cy="13" r="1.500" fill="#e7e7e7" /></svg>
            </Crumbs>
            <ListArea>
              <CardList>
                {cards.map(([name, date, v, art], i) => (
                  <Card key={art} $selected={i === 4}>
                    <Thumb><svg width="68" height="68" viewBox="0 0 68 68">{thumbs[art]}</svg></Thumb>
                    <CardText>
                      <CardName><DocCube />{name}</CardName>
                      <CardDate>{date}</CardDate>
                    </CardText>
                    <VersionBox>
                      <VersionSelect aria-label={`${name} version`}><option>{v}</option></VersionSelect>
                      <Caret c="#555" s={8} />
                    </VersionBox>
                  </Card>
                ))}
              </CardList>
              <ScrollTrack><ScrollThumb /></ScrollTrack>
            </ListArea>
          </DataPanel>

          <Workspace>
            <TabBar>
              <QuickTools>
                <QuickButton $gap={18} aria-label="Data panel"><svg width="14" height="14" viewBox="0 0 14 14" fill="#555"><path d="M0 0h4v4H0zM5 0h4v4H5zM10 0h4v4h-4zM0 5h4v4H0zM5 5h4v4H5zM10 5h4v4h-4zM0 10h4v4H0zM5 10h4v4H5zM10 10h4v4h-4z" /></svg></QuickButton>
                <QuickButton $gap={20} aria-label="File"><svg width="14" height="16" viewBox="0 0 14 16" fill="#555"><path d="M0 0h8v5h5.500v11H0zM9 0l4.500 4H9z" /></svg><Caret c="#555" /></QuickButton>
                <QuickButton $gap={19} aria-label="Save"><svg width="14" height="14" viewBox="0 0 14 14"><path d="M0 0h12l2 2v12H0z" fill="#8e8e8e" /><path d="M3 0h8v5H3zM3 8h8v6H3z" fill="#cbcbcb" /><path d="M7 1h2v3H7zM4 9.500h6v1H4zM4 12h6v1H4z" fill="#8e8e8e" /></svg></QuickButton>
                <QuickButton $gap={12} aria-label="Undo"><svg width="15" height="14" viewBox="0 0 15 14" fill="none" stroke="#8e8e8e" strokeWidth="2"><path d="M6 1 1.500 5.500 6 10M2 5.500h7c3 0 4 3 4 7" /></svg><Caret c="#8e8e8e" /></QuickButton>
                <QuickButton aria-label="Redo"><svg width="15" height="14" viewBox="0 0 15 14" fill="none" stroke="#8e8e8e" strokeWidth="2"><path d="m8 1 4.500 4.500L8 10M12 5.500H6c-3 0-4 3-4 7" /></svg><Caret c="#8e8e8e" /></QuickButton>
              </QuickTools>
              <DocTabs>
                {['mesa -1 v5*', 'Untitled v3*', 'Untitled v1'].map((t, i) => (
                  <DocTab key={t} $active={i === 2}>
                    <TabLabel><DocCube dim={i !== 2} />{t}</TabLabel>
                    <IconButton aria-label={`Close ${t}`}><Close s={9} c={i === 2 ? '#555' : '#777'} /></IconButton>
                  </DocTab>
                ))}
              </DocTabs>
              <AddTab aria-label="New design"><svg width="13" height="13" stroke="#777" strokeWidth="3"><path d="M0 6.500h13M6.500 0v13" /></svg></AddTab>
              <Services>
                <IconButton aria-label="Extensions"><svg width="16" height="16" viewBox="0 0 16 16" fill="none" stroke="#555"><path d="M9 1.600A6.500 6.500 0 1 0 14.300 9" strokeWidth="3" /><path d="m5.500 11 3-3" strokeWidth="2" /><path d="M7 6.500 9.500 9 13 8l2-3-1-1.500L12 5l-1.500-1.500L12 1.500 10.500.7 8 3z" fill="#555" stroke="none" /></svg></IconButton>
                <IconButton aria-label="Job status"><svg width="17" height="17" viewBox="0 0 17 17"><circle cx="8.500" cy="8.500" r="7.500" fill="#d8d8d8" stroke="#555" /><circle cx="8.500" cy="8.500" r="5.800" fill="#555" /><path d="M8.500 4.500v4.500h3.500" stroke="#fff" fill="none" strokeWidth="1.500" /></svg></IconButton>
                <IconButton aria-label="Notifications"><svg width="16" height="16" viewBox="0 0 16 16"><path d="M1 12c2-1 2-3 2-5 0-4 2-6 4.500-6S12 3 12 7c0 2 0 4 2 5zM5.500 13.500h4L7.500 16z" fill="#555" /><circle cx="11.500" cy="4" r="3" fill="#0a96dc" /></svg></IconButton>
                <IconButton aria-label="Help"><svg width="17" height="17" viewBox="0 0 17 17"><circle cx="8.500" cy="8.500" r="8" fill="#555" /><path d="M6 7c0-4 5.500-4 5.500-.8C11.500 8 8.700 8 8.700 10.500M8.700 11.800v2" stroke="#fff" strokeWidth="1.800" fill="none" /></svg></IconButton>
                <Avatar>WB</Avatar>
              </Services>
            </TabBar>

            <Ribbon>
              <DesignButton>DESIGN <Caret /></DesignButton>
              <RibbonMain>
                <RibbonTabs>
                  <RibbonTab $on>SOLID</RibbonTab>
                  <RibbonTab>SURFACE</RibbonTab>
                  <RibbonTab>SHEET METAL</RibbonTab>
                  <RibbonTab>TOOLS</RibbonTab>
                </RibbonTabs>
                <Groups>
                  {groups.map(g => (
                    <Group key={g.label} $w={g.w}>
                      <Tools>
                        {g.tools.map(t => <Tool key={t} aria-label={t}>{t === 'select' ? <SelectArt /> : <Art n={t} />}</Tool>)}
                      </Tools>
                      <GroupLabel>{g.label} <Caret s={7} /></GroupLabel>
                    </Group>
                  ))}
                </Groups>
              </RibbonMain>
            </Ribbon>

            <Canvas>
              <ModelView />
              <BrowserColumn>
                <PaletteBar>
                  <svg width="11" height="7" viewBox="0 0 11 7" fill="#333"><path d="M5 0v7L0 3.500zM10.500 0v7l-5-3.500z" /></svg>
                  <PaletteTitle $indent={9}>BROWSER</PaletteTitle>
                  <Pm /><Grip />
                </PaletteBar>
                <Tree>
                  <Node $depth={0}>
                    <Arrow open />
                    <NodeBox $r={7}>
                      <Cell><Eye /></Cell>
                      <NodeName $tone="#969696">
                        <Cell $w={33}><svg width="16" height="16" viewBox="0 0 16 16"><path d="M.7 5h10.500v10.500H.7z" fill="#f8f9fb" stroke="#444" /><path d="M.7 5 4 .7h11.300L11 5z" fill="#fff" stroke="#444" /><path d="m11 5 4.300-4.300v10.500L11 15.500z" fill="#d3d6db" stroke="#444" /></svg></Cell>
                        Untitled v1
                      </NodeName>
                      <Cell $w={18}><svg width="14" height="14" viewBox="0 0 14 14"><circle cx="7" cy="7" r="6" fill="#fff" stroke="#333" /><circle cx="7" cy="7" r="2.500" fill="#333" /></svg></Cell>
                    </NodeBox>
                  </Node>
                  <Node $depth={1}><Arrow /><NodeBox $r={8}><Cell $w={33}><Gear c="#969696" /></Cell><NodeName>Document Settings</NodeName></NodeBox></Node>
                  <Node $depth={1}><Arrow /><NodeBox $r={8}><Cell $w={33}><Folder /></Cell><NodeName>Named Views</NodeName></NodeBox></Node>
                  <Node $depth={1}><Arrow /><NodeBox $r={8}><Cell><EyeOff /></Cell><NodeName><Cell $w={33}><Folder /></Cell>Origin</NodeName></NodeBox></Node>
                  <Node $depth={1}><Arrow /><NodeBox><Cell><Eye /></Cell><NodeName><Cell $w={33}><Folder /></Cell>Bodies</NodeName></NodeBox></Node>
                  <Node $depth={1}><Arrow open /><NodeBox><Cell><Eye /></Cell><NodeName $hatch><Cell $w={33}><Folder /></Cell>Sketches</NodeName></NodeBox></Node>
                  <Node $depth={2}><NoToggle /><NodeBox $r={0}><Cell><EyeOff /></Cell><NodeName $tone="#0a96dc"><Cell $w={33}><SketchIcon /></Cell>Sketch1</NodeName></NodeBox></Node>
                </Tree>
                <PaletteBar>
                  <PaletteTitle $indent={20}>COMMENTS</PaletteTitle>
                  <Pm plus /><Grip />
                </PaletteBar>
              </BrowserColumn>

              <NavBar>
                <NavButton $w={32} aria-label="Orbit">{navArt.orbit}<Caret s={6} /></NavButton>
                <NavButton $w={26} aria-label="Look at"><MArt n="look" /></NavButton>
                <NavButton $w={26} aria-label="Pan">{navArt.hand}</NavButton>
                <NavButton $w={26} aria-label="Zoom">{navArt.zoom}</NavButton>
                <NavButton $w={33} aria-label="Fit">{navArt.fit}<Caret s={6} /></NavButton>
                <NavButton $w={31} aria-label="Display settings">{navArt.display}<Caret s={6} /></NavButton>
                <NavButton $w={31} aria-label="Grid settings">{navArt.grid}<Caret s={6} /></NavButton>
                <NavButton $w={28} aria-label="Viewports">{navArt.views}<Caret s={6} /></NavButton>
              </NavBar>

              <ViewCube width="60" height="66" viewBox="0 0 60 66">
                <path d="M8 14h40v40H8z" fill="#ddd" opacity=".6" /><path d="M8.500 14.500h38v38h-38z" fill="#eee" stroke="#aaa" /><path d="M16 22h24v24H16z" fill="#e2e3e8" />
                <g fontFamily="Roboto, sans-serif" fontSize="10">
                  <text x="19" y="38" fontFamily="Liberation Sans, sans-serif" fontSize="9" fontWeight="bold" fill="#8f949d">TOP</text>
                  <text x="8" y="12" fill="#7be87b">Y</text><text x="50" y="54" fill="#ff6b6b">X</text><text x="3" y="60" fill="#6b6bff">Z</text>
                </g>
                <circle cx="48" cy="51" r="1" fill="#ff6b6b" />
              </ViewCube>
              <Status>Sketch1</Status>

              <Menu>
                {menu.map(m => (
                  <MenuItem key={m.t} $line={m.line} $on={m.on} $short={!m.icon}>
                    <button>
                      <MenuIcon>{m.icon && <MArt n={m.icon} />}</MenuIcon>
                      <MenuText>{m.t}</MenuText>
                      {m.key && <MenuText $key>{m.key}</MenuText>}
                    </button>
                  </MenuItem>
                ))}
              </Menu>
            </Canvas>

            <Timeline>
              {['M1 1v12M12 1v12L3 7z', 'M8 1v12L1 7zM11 4v6', 'M2 0v14l11-7z', 'M6 1v12l7-6zM3 4v6', 'M12 1v12M1 1v12l9-6z'].map((d, i) => (
                <PlayButton key={d} aria-label={['First', 'Back', 'Play', 'Forward', 'Last'][i]}>
                  <svg width="14" height="14" viewBox="0 0 14 14" fill="#3c3c3c" stroke="#3c3c3c" strokeWidth={i === 2 ? 0 : 1}><path d={d} /></svg>
                </PlayButton>
              ))}
              <Features>
                <svg width="56" height="34" viewBox="0 0 56 34">
                  <rect x="0" y="4" width="24" height="24" rx="1" fill="#0a96dc" />
                  <g transform="translate(4 8)" fill="none"><path d="M2 1.500h12M2 14.500h7M1.500 2v11M14.500 2v6" stroke="#595959" strokeDasharray="5 2" /><path d="m8 13 4-4 2 2-4 4z" fill="#f9cb55" /><path d="m12 9 1.500-1.500 2 2L14 11z" fill="#f04040" /></g>
                  <path d="M28 11h10v11H28z" fill={B2} /><path d="m28 11 3-3h9l-2 3z" fill={B1} /><path d="m38 11 2-3v11l-2 3z" fill={B3} /><path d="M28 22h10l2-2v3l-2 2H28z" fill="#bbb" />
                  <path d="M42.500 20V9M41 11l1.500-2 1.500 2" stroke="#333" fill="none" />
                  <path d="M12.500 29v3.500h23V29" fill="none" stroke="#c4c4c4" strokeWidth="2" /><path d="M42 2h12v4l-5 5v22h-2V11l-5-5z" fill="#666" />
                </svg>
              </Features>
              <IconButton aria-label="Timeline settings"><Gear c="#969696" /></IconButton>
            </Timeline>
          </Workspace>
        </Body>
      </AppWindow>

      <Taskbar>
        <StartButton aria-label="Start"><svg width="16" height="16" viewBox="0 0 16 16" fill="#fff"><path d="m0 2.300 6.500-.9v6.100H0zM7.500 1.200 16 0v7.500H7.500zM0 8.500h6.500v6.100L0 13.700zM7.500 8.500H16V16l-8.500-1.200z" /></svg></StartButton>
        <SearchBox>
          <Search flip c="#222" />
          <SearchInput placeholder="Escribe aquí para buscar" aria-label="Escribe aquí para buscar" />
        </SearchBox>
        <TaskButton aria-label="Cortana"><svg width="16" height="16"><circle cx="8" cy="8" r="6.500" fill="none" stroke="#fff" strokeWidth="2" /></svg></TaskButton>
        <TaskButton aria-label="Task view"><svg width="16" height="16" viewBox="0 0 16 16" fill="none" stroke="#fff" strokeWidth="1.200"><path d="M.5 0v3h10V0M.5 16v-3h10v3M.5 5h10v6H.5zM14 0v4M14 9v7" /><path d="M13 5h2v3h-2z" fill="#fff" /></svg></TaskButton>
        <TaskButton aria-label="Edge">
          <svg width="24" height="24" viewBox="0 0 24 24">
            <defs><linearGradient id="eg" x1="0" y1="0" x2="1" y2=".4"><stop offset="0" stopColor="#2bb4ec" /><stop offset="1" stopColor="#63dd5b" /></linearGradient></defs>
            <circle cx="12" cy="12" r="12" fill="#0c7fd6" /><path d="M0 11C1 4 6 0 12 0c7 0 12 5 12 10 0 4-3 6-6 6s-4-1-3-3c2-4-2-7-7-6-4 0-7 2-8 4z" fill="url(#eg)" />
            <path d="M9 10c-4 6-1 12 6 12 3 0 6-1 8-4-4 2-9 1-11-2-1-2-1-4 0-6z" fill="#0b4f98" /><path d="M23 17c-4 2-10 1-11-3-1-3 1-5 3-4 1 1 1 2 0 3-1 2 0 3 3 3 2 0 4-1 5-2z" fill="#20363f" />
          </svg>
        </TaskButton>
        <TaskButton aria-label="Explorador de archivos"><svg width="22" height="20" viewBox="0 0 22 20"><path d="M0 1h9l2 2h10v3H0z" fill="#e0a100" /><path d="M0 4h21v14H0z" fill="#ffd767" /><path d="M4 11h14v8h-4v-4H8v4H4z" fill="#3c9be4" /></svg></TaskButton>
        <TaskButton aria-label="Chrome" $open>
          <svg width="24" height="24" viewBox="0 0 24 24"><circle cx="12" cy="12" r="11" fill="#f8cb3c" /><path d="M12 1a11 11 0 0 1 9.800 6H12L7 12 2.500 6.500A11 11 0 0 1 12 1z" fill="#dc4b3e" /><path d="M2.500 6.500 7.500 15 12 17l-1 6A11 11 0 0 1 2.500 6.500z" fill="#2fa25a" /><circle cx="12" cy="12" r="5" fill="#fff" /><circle cx="12" cy="12" r="4" fill="#4b87ec" /></svg>
        </TaskButton>
        <TaskButton aria-label="Secure Browser" $open>
          <svg width="24" height="24" viewBox="0 0 24 24"><circle cx="12" cy="12" r="11" fill="#f6c62c" /><path d="M4 4c6-5 16-3 18.500 5 1 4 0 8-3.500 11 1-7-1-12-7-14z" fill="#7e45d6" /><path d="M4 4c-4 4-4 11 1 16 2 2 5 3 7 3-5-3-7-8-6-14l6-3C9 4 7 3 4 4z" fill="#ee6a20" /><path d="m12 5 6 2c1 6-2 10-6 12-4-2-7-6-6-12z" fill="#fff" /><circle cx="12" cy="11" r="1.800" fill="#222" /><path d="M11.300 11h1.400v5h-1.400z" fill="#222" /></svg>
        </TaskButton>
        <TaskButton aria-label="Store"><svg width="24" height="24" viewBox="0 0 24 24"><path d="M6.500 7V1h11v6" fill="none" stroke="#fff" strokeWidth="1.500" /><path d="M0 7h23v15l-2 2H2l-2-2z" fill="#f5f5f5" /><path d="M7 11h4v4H7z" fill="#f25022" /><path d="M12 11h4v4h-4z" fill="#7fba00" /><path d="M7 16h4v4H7z" fill="#00a4ef" /><path d="M12 16h4v4h-4z" fill="#ffb900" /></svg></TaskButton>
        <TaskButton aria-label="Teams" $open>
          <svg width="26" height="24" viewBox="0 0 26 24"><circle cx="13" cy="4" r="3.500" fill="#7b83eb" /><circle cx="21" cy="5" r="2.500" fill="#5059c9" /><path d="M17 9h7v8c-1 3-5 3-7 1z" fill="#5059c9" /><path d="M8 9h10v9c-1 5-8 6-10 1z" fill="#7b83eb" /><rect y="6" width="13" height="13" rx="1" fill="#4b53bc" /><text x="3" y="16.500" fontSize="11" fontWeight="bold" fill="#fff" fontFamily="Liberation Sans, sans-serif">T</text><circle cx="20" cy="19" r="5" fill="#7ac00a" stroke="#fff" /><path d="m17.500 19 2 2 3-4" fill="none" stroke="#fff" strokeWidth="1.500" /></svg>
        </TaskButton>
        <TaskButton aria-label="Fusion 360" $active><FusionLogo s={24} /></TaskButton>
        <TaskButton aria-label="Red app" $open><svg width="24" height="23" viewBox="0 0 24 23" fill="#f00"><path d="m12 0 2 7 7 2-6 2-3 4-3-4-6-2 7-2zM0 12h7l3 4v5zM24 12h-7l-3 4v5zM11.500 16h1v7h-1z" /></svg></TaskButton>
        <Tray>
          <TrayItem $w={24} aria-label="Show hidden icons"><svg width="12" height="8" fill="none" stroke="#fff" strokeWidth="1.300"><path d="m1 7 5-5 5 5" /></svg></TrayItem>
          <TrayItem $w={25} aria-label="Device"><svg width="14" height="15" viewBox="0 0 14 15"><path d="M0 0h14v11H0z" fill="#8b8b8b" stroke="#111" /><path d="M0 13h5v2H0zM8 13h5v2H8z" fill="#aaa" /></svg></TrayItem>
          <TrayItem $w={25} aria-label="Battery"><svg width="17" height="13" viewBox="0 0 17 13" fill="none" stroke="#fff"><path d="M5 4h10v7H5zM16 6v3" strokeWidth="1.500" /><path d="M1 1v3h4V1M3 4v6h2" /><path d="M7 6h6v3H7z" fill="#fff" /></svg></TrayItem>
          <TrayItem $w={26} aria-label="Network"><svg width="13" height="13" viewBox="0 0 13 13" fill="none" stroke="#d5dade"><path d="M1 12C1 6 6 1 12 1M4 12c0-4 4-8 8-8M7 12c0-3 2-5 5-5" /><circle cx="11" cy="11" r="1.500" fill="#fff" /></svg></TrayItem>
          <TrayItem $w={28}>ESP</TrayItem>
          <Clock>16:56<br />10/05/2021</Clock>
          <TrayItem $w={36} aria-label="Notifications"><svg width="16" height="17" viewBox="0 0 16 17" fill="none" stroke="#fff" strokeWidth="1.200"><path d="M.7.700h14.600v12H10L8 15.500 6 12.700H.7z" /></svg></TrayItem>
        </Tray>
      </Taskbar>
    </Desktop>
  );
}
